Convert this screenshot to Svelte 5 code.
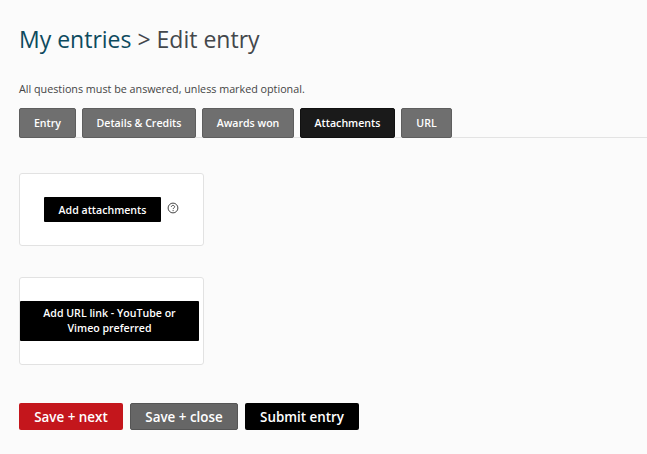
<script>
	const tabs = [
		{ label: 'Entry', width: 57 },
		{ label: 'Details & Credits', width: 114 },
		{ label: 'Awards won', width: 92 },
		{ label: 'Attachments', width: 95, active: true },
		{ label: 'URL', width: 51 }
	];
</script>

<div class="page">
	<h1><a href="#entries">My entries</a> &gt; Edit entry</h1>
	<p class="note">All questions must be answered, unless marked optional.</p>

	<nav class="tabs">
		{#each tabs as tab}
			<button class="tab" class:active={tab.active} style="width: {tab.width}px">{tab.label}</button>
		{/each}
	</nav>

	<section class="card attachments">
		<button class="black add">Add attachments</button>
		<svg class="help" width="12" height="12" viewBox="0 0 12 12" aria-label="Help">
			<circle cx="6" cy="6" r="4.9" fill="none" stroke="#444" stroke-width="1" />
			<path d="M4.4 4.9c0-1 .7-1.5 1.6-1.5s1.6.6 1.6 1.4c0 1.2-1.5 1.2-1.5 2.3" fill="none" stroke="#444" stroke-width="1" />
			<circle cx="6.1" cy="8.6" r=".6" fill="#444" />
		</svg>
	</section>

	<section class="card url">
		<button class="black wide">Add URL link - YouTube or Vimeo preferred</button>
	</section>

	<div class="actions">
		<button class="action red">Save + next</button>
		<button class="action grey">Save + close</button>
		<button class="action submit">Submit entry</button>
	</div>
</div>

<style>
	:global(body) {
		margin: 0;
		background: #fbfbfb;
	}

	.page {
		height: 454px;
		padding: 24px 0 0 19px;
		box-sizing: border-box;
		overflow: hidden;
		font-family: "Open Sans", "Noto Sans", sans-serif;
	}

	button {
		font-family: inherit;
		cursor: pointer;
	}

	h1 {
		margin: 0;
		font-size: 23px;
		line-height: 31px;
		font-weight: 400;
		color: #43474b;
	}

	h1 a {
		color: #0d4a5e;
		text-decoration: none;
	}

	.note {
		margin: 26px 0 0;
		font-size: 10.75px;
		line-height: 16px;
		color: #444;
	}

	.tabs {
		display: flex;
		gap: 6px;
		margin-top: 11px;
		height: 30px;
		border-bottom: 1px solid #e3e3e3;
		box-sizing: border-box;
	}

	.tab {
		height: 30px;
		padding: 0;
		border: 1px solid #5e5e5e;
		border-radius: 2px;
		background: #6f6f6f;
		color: #fff;
		font-size: 10.6px;
		font-weight: 600;
		flex: none;
	}

	.tab.active {
		background: #1a1a1a;
		border-color: #111;
	}

	.card {
		width: 185px;
		box-sizing: border-box;
		background: #fff;
		border: 1px solid #e2e2e2;
		border-radius: 3px;
	}

	.attachments {
		height: 73px;
		margin-top: 35px;
		padding: 23px 0 0 24px;
		display: flex;
		align-items: flex-start;
	}

	.url {
		height: 88px;
		margin-top: 31px;
		padding-top: 23px;
	}

	.black {
		background: #000;
		color: #fff;
		border: 0;
		border-radius: 1px;
		font-size: 10.6px;
		font-weight: 600;
		padding: 0;
	}

	.add {
		width: 117px;
		height: 25px;
		flex: none;
	}

	.help {
		margin: 5px 0 0 6px;
		flex: none;
	}

	.wide {
		display: block;
		width: 179px;
		height: 40px;
		line-height: 15px;
		padding: 0 16px;
	}

	.actions {
		display: flex;
		gap: 7px;
		margin-top: 38px;
	}

	.action {
		height: 27px;
		padding: 0;
		border: 0;
		border-radius: 2px;
		color: #fff;
		font-size: 13.4px;
		font-weight: 600;
	}

	.red {
		width: 104px;
		background: #c4161c;
	}

	.grey {
		width: 108px;
		background: #666;
		border: 1px solid #555;
	}

	.submit {
		width: 114px;
		background: #000;
	}
</style>
